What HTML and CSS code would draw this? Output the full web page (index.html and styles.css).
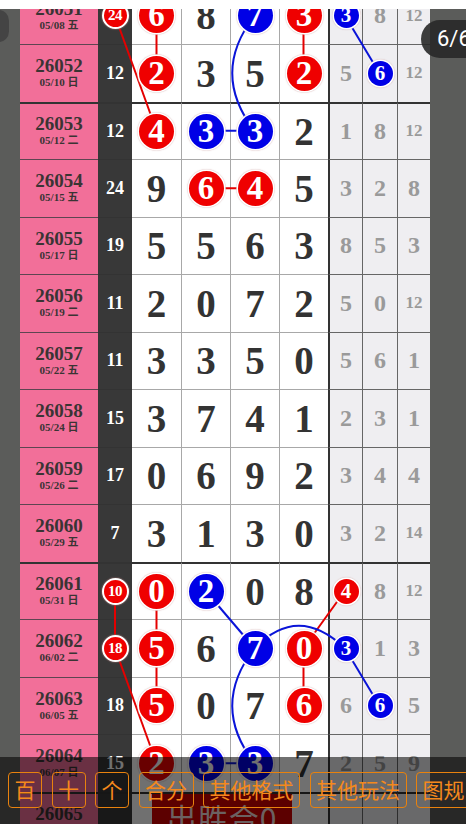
FILE: index.html
```html
<!DOCTYPE html>
<html lang="zh">
<head>
<meta charset="utf-8">
<title>走势图 6/6</title>
<link rel="stylesheet" href="styles.css">
</head>
<body>
<div class="viewer">
  <div class="topband"></div>
  <div class="stage">
    <div class="chart">
      <div class="row">
        <div class="side"></div>
        <div class="issue"><b>26051</b><span>05/08 五</span></div>
        <div class="sum"><span class="ball xs r">24</span></div>
        <div class="w"><span class="ball r">6</span></div>
        <div class="w">8</div>
        <div class="w"><span class="ball b">7</span></div>
        <div class="w"><span class="ball r">3</span></div>
        <div class="g g1"><span class="ball sm b">3</span></div>
        <div class="g">8</div>
        <div class="g"><span class="two">12</span></div>
        <div class="side"></div>
      </div>
      <div class="row">
        <div class="side"></div>
        <div class="issue"><b>26052</b><span>05/10 日</span></div>
        <div class="sum">12</div>
        <div class="w"><span class="ball r">2</span></div>
        <div class="w">3</div>
        <div class="w">5</div>
        <div class="w"><span class="ball r">2</span></div>
        <div class="g g1">5</div>
        <div class="g"><span class="ball sm b">6</span></div>
        <div class="g"><span class="two">12</span></div>
        <div class="side"></div>
      </div>
      <div class="row sep">
        <div class="side"></div>
        <div class="issue"><b>26053</b><span>05/12 二</span></div>
        <div class="sum">12</div>
        <div class="w"><span class="ball r">4</span></div>
        <div class="w"><span class="ball b">3</span></div>
        <div class="w"><span class="ball b">3</span></div>
        <div class="w">2</div>
        <div class="g g1">1</div>
        <div class="g">8</div>
        <div class="g"><span class="two">12</span></div>
        <div class="side"></div>
      </div>
      <div class="row">
        <div class="side"></div>
        <div class="issue"><b>26054</b><span>05/15 五</span></div>
        <div class="sum">24</div>
        <div class="w">9</div>
        <div class="w"><span class="ball r">6</span></div>
        <div class="w"><span class="ball r">4</span></div>
        <div class="w">5</div>
        <div class="g g1">3</div>
        <div class="g">2</div>
        <div class="g">8</div>
        <div class="side"></div>
      </div>
      <div class="row">
        <div class="side"></div>
        <div class="issue"><b>26055</b><span>05/17 日</span></div>
        <div class="sum">19</div>
        <div class="w">5</div>
        <div class="w">5</div>
        <div class="w">6</div>
        <div class="w">3</div>
        <div class="g g1">8</div>
        <div class="g">5</div>
        <div class="g">3</div>
        <div class="side"></div>
      </div>
      <div class="row">
        <div class="side"></div>
        <div class="issue"><b>26056</b><span>05/19 二</span></div>
        <div class="sum">11</div>
        <div class="w">2</div>
        <div class="w">0</div>
        <div class="w">7</div>
        <div class="w">2</div>
        <div class="g g1">5</div>
        <div class="g">0</div>
        <div class="g"><span class="two">12</span></div>
        <div class="side"></div>
      </div>
      <div class="row">
        <div class="side"></div>
        <div class="issue"><b>26057</b><span>05/22 五</span></div>
        <div class="sum">11</div>
        <div class="w">3</div>
        <div class="w">3</div>
        <div class="w">5</div>
        <div class="w">0</div>
        <div class="g g1">5</div>
        <div class="g">6</div>
        <div class="g">1</div>
        <div class="side"></div>
      </div>
      <div class="row">
        <div class="side"></div>
        <div class="issue"><b>26058</b><span>05/24 日</span></div>
        <div class="sum">15</div>
        <div class="w">3</div>
        <div class="w">7</div>
        <div class="w">4</div>
        <div class="w">1</div>
        <div class="g g1">2</div>
        <div class="g">3</div>
        <div class="g">1</div>
        <div class="side"></div>
      </div>
      <div class="row">
        <div class="side"></div>
        <div class="issue"><b>26059</b><span>05/26 二</span></div>
        <div class="sum">17</div>
        <div class="w">0</div>
        <div class="w">6</div>
        <div class="w">9</div>
        <div class="w">2</div>
        <div class="g g1">3</div>
        <div class="g">4</div>
        <div class="g">4</div>
        <div class="side"></div>
      </div>
      <div class="row">
        <div class="side"></div>
        <div class="issue"><b>26060</b><span>05/29 五</span></div>
        <div class="sum">7</div>
        <div class="w">3</div>
        <div class="w">1</div>
        <div class="w">3</div>
        <div class="w">0</div>
        <div class="g g1">3</div>
        <div class="g">2</div>
        <div class="g"><span class="two">14</span></div>
        <div class="side"></div>
      </div>
      <div class="row sep">
        <div class="side"></div>
        <div class="issue"><b>26061</b><span>05/31 日</span></div>
        <div class="sum"><span class="ball xs r">10</span></div>
        <div class="w"><span class="ball r">0</span></div>
        <div class="w"><span class="ball b">2</span></div>
        <div class="w">0</div>
        <div class="w">8</div>
        <div class="g g1"><span class="ball sm r">4</span></div>
        <div class="g">8</div>
        <div class="g"><span class="two">12</span></div>
        <div class="side"></div>
      </div>
      <div class="row">
        <div class="side"></div>
        <div class="issue"><b>26062</b><span>06/02 二</span></div>
        <div class="sum"><span class="ball xs r">18</span></div>
        <div class="w"><span class="ball r">5</span></div>
        <div class="w">6</div>
        <div class="w"><span class="ball b">7</span></div>
        <div class="w"><span class="ball r">0</span></div>
        <div class="g g1"><span class="ball sm b">3</span></div>
        <div class="g">1</div>
        <div class="g">3</div>
        <div class="side"></div>
      </div>
      <div class="row">
        <div class="side"></div>
        <div class="issue"><b>26063</b><span>06/05 五</span></div>
        <div class="sum">18</div>
        <div class="w"><span class="ball r">5</span></div>
        <div class="w">0</div>
        <div class="w">7</div>
        <div class="w"><span class="ball r">6</span></div>
        <div class="g g1">6</div>
        <div class="g"><span class="ball sm b">6</span></div>
        <div class="g">5</div>
        <div class="side"></div>
      </div>
      <div class="row">
        <div class="side"></div>
        <div class="issue"><b>26064</b><span>06/07 日</span></div>
        <div class="sum">15</div>
        <div class="w"><span class="ball r">2</span></div>
        <div class="w"><span class="ball b">3</span></div>
        <div class="w"><span class="ball b">3</span></div>
        <div class="w">7</div>
        <div class="g g1">2</div>
        <div class="g">5</div>
        <div class="g">9</div>
        <div class="side"></div>
      </div>
      <div class="row sep">
        <div class="side"></div>
        <div class="issue"><b>26065</b><span>06/10 二</span></div>
        <div class="sum"></div>
        <div class="w wide"><span class="tag">出胜合0</span></div>
        <div class="g g1"></div>
        <div class="g"></div>
        <div class="g"></div>
        <div class="side"></div>
      </div>

      <svg class="links" width="466" height="862" viewBox="0 0 466 862" aria-hidden="true">
        <g fill="none" stroke="#e40000" stroke-width="2">
          <line x1="115" y1="28.75" x2="156.5" y2="143.75"/>
          <line x1="156.5" y1="28.75" x2="156.5" y2="86.25"/>
          <line x1="303.5" y1="28.75" x2="303.5" y2="86.25"/>
          <line x1="205.5" y1="201.25" x2="254.5" y2="201.25"/>
          <line x1="115" y1="603.75" x2="115" y2="661.25"/>
          <line x1="115" y1="661.25" x2="156.5" y2="776.25"/>
          <line x1="156.5" y1="603.75" x2="156.5" y2="718.75"/>
          <line x1="303.5" y1="661.25" x2="345" y2="603.75"/>
          <line x1="303.5" y1="661.25" x2="303.5" y2="718.75"/>
        </g>
        <g fill="none" stroke="#0a14d8" stroke-width="2">
          <path d="M254.5 28.75 Q210 86.25 254.5 143.75"/>
          <line x1="205.5" y1="143.75" x2="254.5" y2="143.75"/>
          <line x1="345" y1="28.75" x2="379.5" y2="86.25"/>
          <line x1="205.5" y1="603.75" x2="254.5" y2="661.25"/>
          <path d="M254.5 661.25 Q298 616 345 661.25"/>
          <path d="M254.5 661.25 Q210 718.75 254.5 776.25"/>
          <line x1="205.5" y1="776.25" x2="254.5" y2="776.25"/>
          <line x1="345" y1="661.25" x2="379.5" y2="718.75"/>
        </g>
      </svg>
    </div>
    <div class="nub"></div>
    <div class="pager">6/6</div>
  </div>
  <div class="toolbar">
    <span class="btn">百</span>
    <span class="btn">十</span>
    <span class="btn">个</span>
    <span class="btn">合分</span>
    <span class="btn">其他格式</span>
    <span class="btn">其他玩法</span>
    <span class="btn">图规</span>
  </div>
</div>
</body>
</html>
```

FILE: styles.css
```css
html, body {
  margin: 0;
  padding: 0;
}
body {
  width: 466px;
  height: 824px;
  overflow: hidden;
  background: #fff;
  font-family: "Liberation Serif", "Noto Sans CJK SC", serif;
}
.viewer {
  position: relative;
  width: 466px;
  height: 824px;
  overflow: hidden;
}
.topband {
  height: 9px;
  background: #fff;
}
.stage {
  position: relative;
  height: 815px;
  overflow: hidden;
  background: #5b5c5a;
}
.chart {
  position: relative;
  margin-top: -22.5px;
}
.row {
  display: grid;
  grid-template-columns: 20px 78px 34px 49px 49px 49px 49px 34px 35px 33px 36px;
  height: 57.5px;
}
.row > div {
  box-sizing: border-box;
  display: flex;
  align-items: center;
  justify-content: center;
}
.side {
  background: #5b5c5a;
}
.issue {
  flex-direction: column;
  background: #f26f99;
  color: #3a3434;
  border-top: 1px solid #5e4551;
  padding-bottom: 2px;
}
.issue b {
  font-size: 19px;
  line-height: 21px;
  font-weight: 700;
}
.issue span {
  font-size: 11px;
  line-height: 13px;
  font-weight: 700;
  font-family: "Liberation Serif", "Noto Sans CJK SC", serif;
}
.sum {
  background: #383838;
  color: #fff;
  font-size: 18px;
  font-weight: 700;
  border-top: 1px solid #333;
}
.w {
  background: #fff;
  color: #333;
  font-size: 39px;
  font-weight: 700;
  border-top: 1px solid #a8a8a8;
  border-left: 1px solid #a8a8a8;
}
.sum + .w {
  border-left: 0;
}
.w.wide {
  grid-column: span 4;
  justify-content: flex-start;
  align-items: flex-start;
  overflow: hidden;
}
.g {
  background: #efeef1;
  color: #9a9a9a;
  font-size: 24px;
  font-weight: 700;
  border-top: 1px solid #666;
  border-left: 1px solid #666;
}
.g.g1 {
  border-left: 2px solid #333;
}
.row.sep > .issue,
.row.sep > .sum,
.row.sep > .w,
.row.sep > .g {
  border-top: 2px solid #333;
}
.two {
  font-size: 17px;
}
.ball {
  position: relative;
  z-index: 2;
  display: flex;
  align-items: center;
  justify-content: center;
  width: 35px;
  height: 35px;
  border-radius: 50%;
  color: #fff;
  font-size: 33px;
  line-height: 1;
  box-shadow: 0 0 0 1.5px #fff, 0 0 1px 2px rgba(210, 170, 170, 0.5);
}
.ball.r {
  background: #ef0000;
}
.ball.b {
  background: #0000e6;
}
.ball.sm {
  width: 25px;
  height: 25px;
  font-size: 21px;
}
.ball.xs {
  box-sizing: border-box;
  width: 27px;
  height: 27px;
  font-size: 15px;
  border: 2px solid #fff;
  box-shadow: 0 0 1px 1px rgba(120, 90, 90, 0.6);
  letter-spacing: -0.5px;
}
.tag {
  display: block;
  margin-left: 20px;
  width: 140px;
  height: 60px;
  background: #d20000;
  color: #f3dede;
  font-family: "Noto Sans CJK SC", sans-serif;
  font-size: 30px;
  font-weight: 400;
  line-height: 1;
  padding-top: 8px;
  box-sizing: border-box;
  text-align: center;
  letter-spacing: 1px;
}
.links {
  position: absolute;
  top: 0;
  left: 0;
  z-index: 1;
  pointer-events: none;
}
.nub {
  position: absolute;
  left: -12px;
  top: 1px;
  width: 21px;
  height: 32px;
  border-radius: 16px;
  background: #444;
}
.pager {
  position: absolute;
  left: 421px;
  top: 11px;
  width: 70px;
  height: 38px;
  box-sizing: border-box;
  padding-left: 16px;
  border-radius: 19px;
  background: rgba(40, 40, 40, 0.9);
  color: #fff;
  font-family: Roboto, "Noto Sans", sans-serif;
  font-size: 22px;
  line-height: 38px;
  z-index: 3;
}
.toolbar {
  position: absolute;
  left: 0;
  right: 0;
  bottom: 0;
  height: 67px;
  box-sizing: border-box;
  padding: 15px 0 0 8px;
  display: flex;
  align-items: flex-start;
  gap: 9.5px;
  background: rgba(0, 0, 0, 0.56);
  z-index: 5;
  white-space: nowrap;
}
.btn {
  flex: none;
  height: 36px;
  box-sizing: border-box;
  padding: 0 5.5px;
  border: 1px solid #e8820e;
  border-radius: 4px;
  color: #f5891c;
  font-family: "Noto Sans CJK SC", sans-serif;
  font-size: 21px;
  line-height: 33px;
}
```
